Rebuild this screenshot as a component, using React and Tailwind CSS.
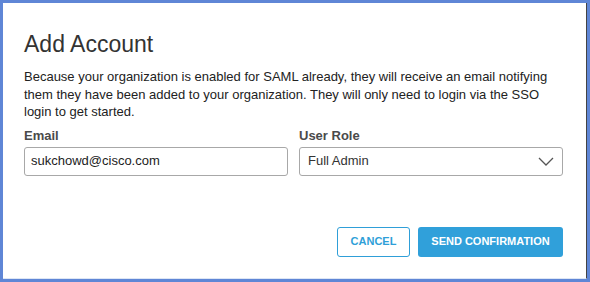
export default function App() {
  return (
    <div className="w-[590px] h-[282px] bg-white border-[3px] border-[#5f86d6] box-border" style={{ fontFamily: '"Liberation Sans", Arial, sans-serif' }}>
      <div className="h-full w-full border-r border-[#444] border-b border-b-[#dde6f5] px-[21px] pt-[27px] flex flex-col">
        <h1 className="text-[23px] leading-[28px] text-[#333] font-normal">Add Account</h1>
        <p className="mt-[10px] text-[13px] leading-[17.5px] text-[#222] w-[540px]">
          Because your organization is enabled for SAML already, they will receive an email notifying them they have been added to your organization. They will only need to login via the SSO login to get started.
        </p>
        <div className="mt-[7px] flex gap-[11px]">
          <div className="flex flex-col w-[264px]">
            <label className="text-[13px] font-bold text-[#4a4a4a] leading-[16px]">Email</label>
            <div className="mt-[3px] h-[29px] border border-[#a8a8a8] rounded-[3px] flex items-center px-[6px] text-[13px] text-[#222]">sukchowd@cisco.com</div>
          </div>
          <div className="flex flex-col w-[264px]">
            <label className="text-[13px] font-bold text-[#4a4a4a] leading-[16px]">User Role</label>
            <div className="mt-[3px] h-[29px] border border-[#a8a8a8] rounded-[3px] flex items-center justify-between pl-[8px] pr-[8px] text-[13px] text-[#333]">
              <span>Full Admin</span>
              <svg width="16" height="9" viewBox="0 0 16 9" fill="none"><path d="M1 1l7 7 7-7" stroke="#555" strokeWidth="1.3" /></svg>
            </div>
          </div>
        </div>
        <div className="mt-[51px] flex justify-end gap-[8px] pr-[2px]">
          <button className="h-[30px] w-[73px] border border-[#2f9fd8] rounded-[3px] text-[#2f9fd8] text-[11px] font-bold bg-white">CANCEL</button>
          <button className="h-[30px] w-[145px] rounded-[3px] bg-[#30a0da] text-white text-[11px] font-bold">SEND CONFIRMATION</button>
        </div>
      </div>
    </div>
  );
}
